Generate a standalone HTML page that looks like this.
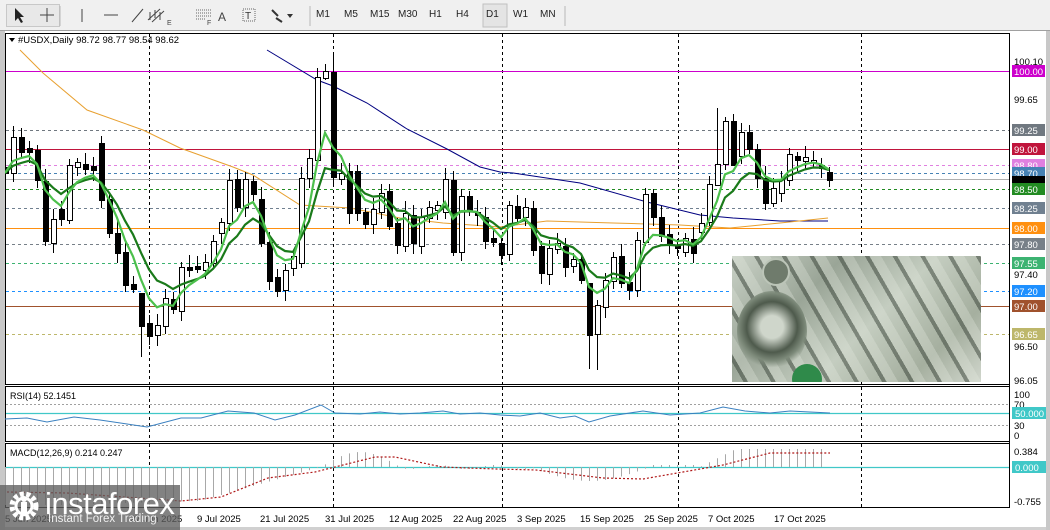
<!DOCTYPE html>
<html><head><meta charset="utf-8"><style>
*{margin:0;padding:0;box-sizing:border-box}
body{width:1050px;height:530px;overflow:hidden;background:#f0f0f0;font-family:"Liberation Sans",Tahoma,sans-serif;position:relative}
.tb{position:absolute;left:0;top:0;width:1050px;height:31px;background:#f0f0f0;border-bottom:1px solid #a0a0a0}
.tf{position:absolute;top:9px;font-size:10px;color:#222}
.sep{position:absolute;top:5px;width:1px;height:21px;background:#b8b8b8}
svg text{font-family:"Liberation Sans",Tahoma,sans-serif}
</style></head><body>
<div class="tb">
<div style="position:absolute;left:6px;top:4px;width:54px;height:23px;border:1px solid #c8c8c8;background:#e8e8e8"></div>
<svg width="570" height="31" style="position:absolute;left:0;top:0">
<path d="M15 8 L15 21 L18 18 L21 23 L23 22 L20 17 L24 17 Z" fill="#222"/>
<path d="M47 8V22M40 15H54" stroke="#444" stroke-width="1"/>
<line x1="60" y1="6" x2="60" y2="26" stroke="#b8b8b8"/>
<path d="M82 9V22" stroke="#444"/>
<path d="M104 15H118" stroke="#444"/>
<path d="M132 22L143 9" stroke="#444"/>
<path d="M148 20L160 9M152 22L164 11M150 12V20M155 10V18M160 12V20" stroke="#444"/>
<text x="167" y="25" font-size="7" fill="#444">E</text>
<path d="M196 10H211M196 13H211M196 16H211M196 19H205" stroke="#666" stroke-dasharray="1 1"/>
<text x="207" y="25" font-size="7" fill="#444">F</text>
<text x="218" y="21" font-size="12" fill="#444">A</text>
<rect x="243" y="9" width="12" height="12" fill="none" stroke="#666" stroke-dasharray="1 1"/>
<text x="245" y="19" font-size="10" fill="#333">T</text>
<path d="M272 10L278 16M276 18L282 22" stroke="#333" stroke-width="2"/>
<path d="M287 14L293 14L290 18Z" fill="#333"/>
<line x1="310" y1="6" x2="310" y2="26" stroke="#b8b8b8"/>
<rect x="483" y="4" width="24" height="23" fill="#e4e4e4" stroke="#c0c0c0"/>
<line x1="565" y1="6" x2="565" y2="26" stroke="#b8b8b8"/>
</svg>
<span class="tf" style="left:316px">M1</span><span class="tf" style="left:344px">M5</span><span class="tf" style="left:370px">M15</span><span class="tf" style="left:398px">M30</span><span class="tf" style="left:429px">H1</span><span class="tf" style="left:456px">H4</span><span class="tf" style="left:486px">D1</span><span class="tf" style="left:513px">W1</span><span class="tf" style="left:540px">MN</span>
</div>
<div style="position:absolute;left:1046px;top:31px;width:4px;height:499px;background:#c8c8c8"></div>
<div style="position:absolute;left:0;top:31px;width:5px;height:499px;background:#c8c8c8"></div>
<div style="position:absolute;left:5px;top:527px;width:1041px;height:3px;background:#d0d0d0"></div>
<svg id="ch" width="1041" height="496" style="position:absolute;left:5px;top:31px;background:#fff" viewBox="5 31 1041 496"></svg>
<div style="position:absolute;left:732px;top:256px;width:249px;height:126px;overflow:hidden;background:linear-gradient(135deg,#c9d1c6 0%,#9aa597 30%,#c4cdc0 55%,#a5af9f 80%,#d0d6cc 100%)">
<div style="position:absolute;inset:0;background:repeating-linear-gradient(60deg,rgba(40,50,40,.0) 0 10px,rgba(40,50,40,.45) 10px 14px,rgba(230,235,225,.3) 14px 24px)"></div>
<div style="position:absolute;left:5px;top:35px;width:70px;height:80px;border-radius:50%;background:radial-gradient(circle at 50% 45%,#cfd6cb 0 20%,#4e5a4c 45%,#7d8a7a 60%,transparent 72%)"></div>
<div style="position:absolute;left:30px;top:2px;width:28px;height:28px;border-radius:50%;background:#6f7b6c;border:2px solid #bcc5b8"></div>
<div style="position:absolute;left:60px;top:108px;width:30px;height:30px;border-radius:50%;background:#2f8a4a"></div>
</div>
<div style="position:absolute;left:0;top:485px;width:180px;height:45px;background:rgba(95,95,95,.78)"></div>
<svg width="40" height="40" style="position:absolute;left:6px;top:488px">
<circle cx="18" cy="18" r="12" fill="none" stroke="#fff" stroke-width="5" stroke-dasharray="4 2.5"/>
<circle cx="18" cy="18" r="8" fill="none" stroke="#fff" stroke-width="3"/>
<rect x="15" y="14" width="6" height="14" fill="#fff"/><circle cx="18" cy="11" r="3" fill="#fff"/>
</svg>
<div style="position:absolute;left:45px;top:486px;font-size:31px;color:#fff;letter-spacing:-0.5px">instaforex</div>
<div style="position:absolute;left:48px;top:513px;font-size:11.5px;color:#f0f0f0">Instant Forex Trading</div>
<script>
var s=document.getElementById('ch');var h='';
function L(x1,y1,x2,y2,c,w,d){h+='<line x1="'+x1+'" y1="'+y1+'" x2="'+x2+'" y2="'+y2+'" stroke="'+c+'" stroke-width="'+(w||1)+'"'+(d?' stroke-dasharray="'+d+'"':'')+'/>';}
function T(x,y,t,c,sz){h+='<text x="'+x+'" y="'+y+'" font-size="'+(sz||10)+'" fill="'+(c||'#000')+'">'+t+'</text>';}
function P(pts,c,w,d){h+='<polyline fill="none" points="'+pts+'" stroke="'+c+'" stroke-width="'+(w||1)+'"'+(d?' stroke-dasharray="'+d+'"':'')+'/>';}
// pane borders
h+='<rect x="5.5" y="33.5" width="1004" height="351" fill="none" stroke="#000"/>';
h+='<rect x="5.5" y="386.5" width="1004" height="55" fill="none" stroke="#000"/>';
h+='<rect x="5.5" y="443.5" width="1004" height="64" fill="none" stroke="#000"/>';
// verticals
[149,333,502,678,861].forEach(function(x){L(x+.5,34,x+.5,384,'#000',1,'3 3');L(x+.5,387,x+.5,441,'#000',1,'3 3');L(x+.5,444,x+.5,507,'#000',1,'3 3');});
// horizontal levels
var lv=[[71,'#cc00cc',0,'100.00'],[130,'#707880','3 3','99.25'],[149,'#c0143c',0,'99.00'],[165,'#e080e0','3 3','98.80'],[173,'#4682b4','3 3','98.70'],[189,'#228b22','3 3','98.50'],[208,'#708090','3 3','98.25'],[228,'#ff9010',0,'98.00'],[244,'#778088','3 3','97.80'],[263,'#3cb371','3 3','97.55'],[291,'#1e90ff','3 3','97.20'],[306,'#a0522d',0,'97.00'],[334,'#bdb76b','3 3','96.65']];
lv.forEach(function(a){L(6,a[0]+.5,1009,a[0]+.5,a[1],1,a[2]||null);});
L(6,179.5,1009,179.5,'#b0b0b0',1);
// MAs
P('267,50 317,80 333,86 367,103 407,129 447,149 480,167 500,172 513,173 580,183 647,202 700,215 733,218 780,221 828,221','#000080',1);
P('20,50 43,73 87,110 143,130 180,148 233,167 253,175 300,205 350,208 400,218 443,223 500,227 547,221 613,223 680,225 730,228 780,223 828,218','#e8a030',1);
// candles
var c=[[167,173,0],[137,173,1],[137,152,0],[148,152,0],[150,180,0],[181,241,0],[219,243,1],[209,219,0],[165,220,1],[162,167,1],[164,169,0],[166,170,0],[143,200,0],[199,233,0],[233,253,0],[252,285,0],[284,289,0],[293,326,0],[323,336,0],[325,335,1],[298,326,1],[299,309,0],[267,311,1],[267,270,0],[266,269,0],[262,270,1],[241,263,1],[222,233,1],[180,223,1],[179,207,0],[179,207,1],[181,194,0],[199,243,0],[242,281,0],[277,291,0],[270,290,1],[256,268,1],[178,263,1],[158,178,1],[77,160,1],[71,78,1],[72,177,0],[173,179,1],[171,213,0],[171,213,0],[212,224,0],[209,224,1],[193,212,1],[191,226,0],[223,245,0],[213,246,1],[215,243,0],[217,246,1],[207,218,1],[205,210,1],[179,212,1],[180,252,0],[196,252,1],[196,210,0],[212,215,0],[217,241,0],[238,242,0],[243,255,0],[205,254,1],[206,218,0],[207,217,1],[208,250,0],[246,273,0],[248,274,1],[243,249,1],[246,267,0],[259,266,1],[259,280,0],[283,335,0],[305,334,1],[280,307,1],[257,281,1],[256,283,0],[282,290,0],[240,290,1],[194,242,1],[193,217,0],[217,236,0],[234,243,0],[246,248,0],[238,252,1],[239,253,0],[223,232,1],[184,222,1],[164,185,1],[121,164,1],[121,165,0],[132,156,1],[132,149,0],[149,178,0],[178,203,0],[188,203,1],[179,193,1],[154,180,1],[156,160,0],[157,161,1],[160,162,1],[165,168,0],[172,180,0]];
var wk={39:[68,162],40:[64,80],41:[54,185],17:[293,357],73:[283,369],74:[300,370],89:[108,170],91:[114,165],18:[315,345],68:[240,285]};
var cl=[];
c.forEach(function(a,i){var x=5+8*i;var w=wk[i]||[a[0]-4-(i*7%9),a[1]+4+(i*5%8)];
L(x+.5,w[0],x+.5,w[1],'#000',1);
var ht=Math.max(1,a[1]-a[0]);
h+='<rect x="'+(x-2)+'.5" y="'+a[0]+'.5" width="5" height="'+ht+'" fill="'+(a[2]?'#fff':'#000')+'" stroke="#000"/>';
cl.push(a[2]?a[0]:a[1]);});
function ema(n){var k=2/(n+1),e=cl[0],r=[];cl.forEach(function(v,i){e=i?v*k+e*(1-k):v;r.push((5+8*i)+','+e.toFixed(1));});return r.join(' ');}
P(ema(9),'#1a7a1a',2.2);P(ema(5),'#4cc04c',2.2);
// RSI
L(6,404.5,1009,404.5,'#a0a0a0',1,'2 2');L(6,425.5,1009,425.5,'#a0a0a0',1,'2 2');
L(6,413.5,1009,413.5,'#40c8c8',1.2);
P('5,419 27,418 47,422 74,417 100,420 147,427 181,418 201,418 228,411 254,413 275,420 295,415 321,405 335,413 360,414 380,412 400,414 420,413 443,411 460,414 480,413 500,415 520,416 540,413 560,418 575,416 589,422 610,416 643,411 670,415 700,413 723,407 745,411 770,413 790,411 810,412 830,413','#3a80c0',1);
T(10,399,'RSI(14) 52.1451','#000',9);
// MACD
L(6,467.5,1009,467.5,'#40c8c8',1.2);
for(var i=0;i<103;i++){var x=5+8*i+.5,v;
if(x<200)v=38-(x<60?0:(x-60)*0.03);else if(x<321)v=34*(321-x)/121;else if(x<400)v=-15*Math.sin((x-321)/79*Math.PI);else if(x<530)v=2*Math.sin(x/9);else if(x<650)v=14*Math.sin((x-530)/120*Math.PI);else if(x<700)v=-2;else v=-Math.min(18,(x-700)*0.5);
if(Math.abs(v)>0.5)L(x,467,x,467+v,'#a8a8a8',1);}
P('7,492 67,493 181,501 221,497 268,478 315,472 335,467 375,457 395,457 442,467 496,469 536,470 603,478 643,479 683,472 723,465 770,453 830,453','#b01818',1.2,'2 2');
T(10,456,'MACD(12,26,9) 0.214 0.247','#000',9);
// chart header
h+='<path d="M9 38 L15 38 L12 42 Z" fill="#000"/>';
T(18,43,'#USDX,Daily  98.72 98.77 98.54 98.62','#000',9.5);
// right axis
L(1009.5,34,1009.5,507,'#000',1);
[[65,'100.10'],[103,'99.65'],[278,'97.40'],[350,'96.50'],[384,'96.05'],[398,'100'],[408,'70'],[429,'30'],[439,'0'],[455,'0.384'],[505,'-0.755']].forEach(function(a){T(1014,a[0],a[1],'#000',9.5);});
lv.forEach(function(a){h+='<rect x="1012" y="'+(a[0]-6)+'" width="33" height="12" fill="'+a[1]+'"/>';T(1014,a[0]+4,a[3],'#fff',9.5);});
h+='<rect x="1012" y="176" width="33" height="7" fill="#000"/>';
h+='<rect x="1012" y="407" width="34" height="12" fill="#40c8c8"/>';T(1015,417,'50.000','#fff',9.5);
h+='<rect x="1012" y="461" width="34" height="12" fill="#40c8c8"/>';T(1015,471,'0.000','#fff',9.5);
// dates
[[5,'5 Jun 2025'],[130,'27 Jun 2025'],[197,'9 Jul 2025'],[260,'21 Jul 2025'],[325,'31 Jul 2025'],[389,'12 Aug 2025'],[453,'22 Aug 2025'],[517,'3 Sep 2025'],[580,'15 Sep 2025'],[644,'25 Sep 2025'],[708,'7 Oct 2025'],[774,'17 Oct 2025']].forEach(function(a){T(a[0],522,a[1],'#000',9.5);});
s.innerHTML=h;
</script>
</body></html>
